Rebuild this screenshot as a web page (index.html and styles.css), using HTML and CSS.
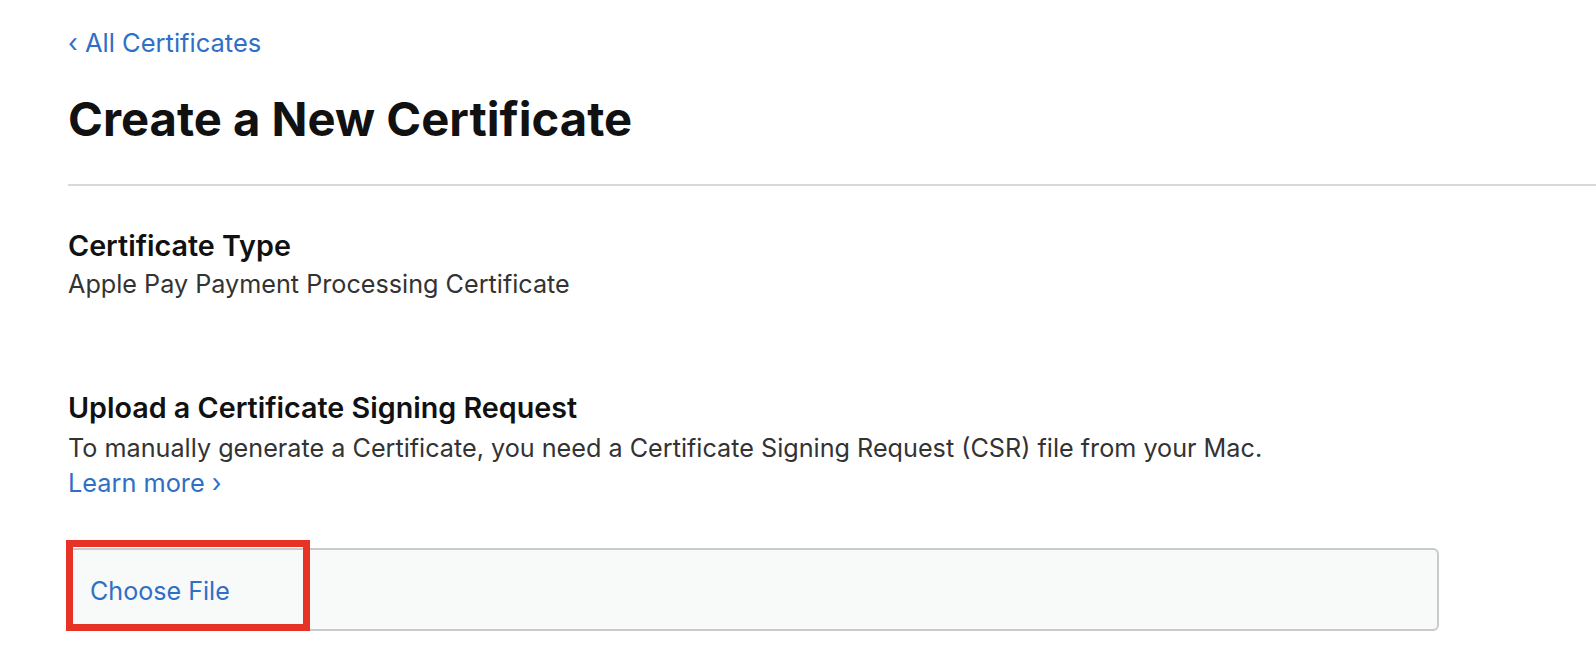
FILE: index.html
```html
<!DOCTYPE html>
<html lang="en">
<head>
<meta charset="utf-8">
<title>Create a New Certificate</title>
<link rel="stylesheet" href="styles.css">
</head>
<body>
<main class="page">
  <a class="back" href="#"><span class="chev">‹</span> All Certificates</a>
  <h1 class="title">Create a New Certificate</h1>
  <div class="divider"></div>
  <section class="field">
    <h2 class="field-label">Certificate Type</h2>
    <p class="field-value">Apple Pay Payment Processing Certificate</p>
  </section>
  <section class="upload">
    <h2 class="field-label">Upload a Certificate Signing Request</h2>
    <p class="field-value">To manually generate a Certificate, you need a Certificate Signing Request (CSR) file from your Mac.</p>
    <a class="learn" href="#">Learn more <span class="chev">›</span></a>
    <div class="file-input">
      <span class="choose">Choose File</span>
      <div class="highlight"></div>
    </div>
  </section>
</main>
</body>
</html>
```
FILE: styles.css
```css
* { box-sizing: border-box; }
html, body { margin: 0; padding: 0; background: #fff; }
body {
  font-family: Inter, "Noto Sans", "Liberation Sans", sans-serif;
  color: #1d1d1f;
}
.page {
  padding: 26px 0 0 68px;
}
.back {
  display: block;
  font-size: 25.5px;
  line-height: 34px;
  color: #2f6fc6;
  text-decoration: none;
}
.title {
  margin: 31px 0 0 0;
  font-size: 47.2px;
  line-height: 56px;
  font-weight: 700;
  color: #111;
}
.divider {
  margin-top: 37px;
  height: 2px;
  background: #d8d8d8;
}
.field { margin-top: 39px; }
.field-label {
  margin: 0 0 1px 0;
  font-size: 28.7px;
  line-height: 41px;
  font-weight: 600;
  color: #111;
}
.field-value {
  margin: 0;
  font-size: 25.2px;
  line-height: 34px;
  color: #333;
}
.upload { margin-top: 85px; }
.upload .field-label { line-height: 43px; margin-bottom: 2px; }
.learn {
  display: block;
  margin-top: 1px;
  font-size: 25.3px;
  line-height: 34px;
  color: #2f6fc6;
  text-decoration: none;
}
.file-input {
  position: relative;
  margin-top: 48px;
  width: 1371px;
  height: 83px;
  border: 2px solid #cacaca;
  border-radius: 6px;
  background: #f8f9f9;
  display: flex;
  align-items: center;
  padding: 2px 0 0 20px;
}
.choose {
  font-size: 25.1px;
  color: #2f6fc6;
}
.highlight {
  position: absolute;
  left: -4px;
  top: -10px;
  width: 244px;
  height: 91px;
  border: 7px solid #e63326;
}
```
